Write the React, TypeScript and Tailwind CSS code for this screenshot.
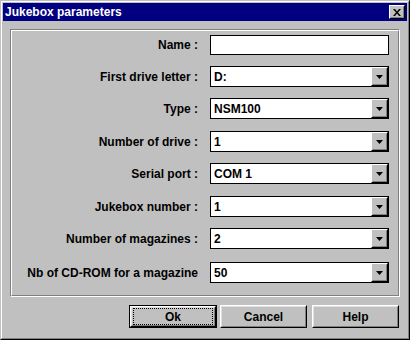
const rows = [
  { label: "Name :", value: "", combo: false, mt: "mt-[4px]" },
  { label: "First drive letter :", value: "D:", combo: true, mt: "mt-[11px]" },
  { label: "Type :", value: "NSM100", combo: true, mt: "mt-[11px]" },
  { label: "Number of drive :", value: "1", combo: true, mt: "mt-[12px]" },
  { label: "Serial port :", value: "COM 1", combo: true, mt: "mt-[11px]" },
  { label: "Jukebox number :", value: "1", combo: true, mt: "mt-[12px]" },
  { label: "Number of magazines :", value: "2", combo: true, mt: "mt-[11px]" },
  { label: "Nb of CD-ROM for a magazine", value: "50", combo: true, mt: "mt-[13px]" },
];

function Field({ value, combo }: { value: string; combo: boolean }) {
  return (
    <div
      className={`flex w-[179px] items-stretch border border-black bg-white ${
        combo ? "h-[21px]" : "h-[20px]"
      }`}
    >
      <span className="flex flex-1 items-center pl-[3px] text-[12px] font-bold leading-none">
        {value}
      </span>
      {combo && (
        <div className="w-[17px] border border-t-white border-l-white border-r-black border-b-black bg-[#c0c0c0]">
          <div className="flex h-full items-center justify-center border border-transparent border-r-[#808080] border-b-[#808080]">
            <svg width="7" height="4" viewBox="0 0 7 4">
              <path d="M0 0h7L3.5 4z" fill="#000" />
            </svg>
          </div>
        </div>
      )}
    </div>
  );
}

function Button({ label, isDefault }: { label: string; isDefault?: boolean }) {
  const face = (
    <div className="h-full border border-t-white border-l-white border-r-black border-b-black">
      <div className="flex h-full items-center justify-center border border-t-[#dfdfdf] border-l-[#dfdfdf] border-r-[#808080] border-b-[#808080] px-[1px]">
        <div
          className={`flex h-full w-full items-center justify-center text-[12px] font-bold ${
            isDefault ? "border border-dotted border-black" : "border border-transparent"
          }`}
        >
          {label}
        </div>
      </div>
    </div>
  );
  return isDefault ? (
    <div className="h-[23px] w-[88px] border border-black">{face}</div>
  ) : (
    <div className="h-[23px] w-[87px]">{face}</div>
  );
}

export default function App() {
  return (
    <div
      className="h-[340px] w-[410px] bg-[#c0c0c0] text-black"
      style={{ fontFamily: '"Liberation Sans", Arial, sans-serif' }}
    >
      <div className="h-full border border-t-[#c0c0c0] border-l-[#c0c0c0] border-r-black border-b-black">
        <div className="flex h-full flex-col border border-t-white border-l-white border-r-[#808080] border-b-[#808080] p-px">
          {/* Title bar */}
          <div className="flex h-[18px] items-center justify-between bg-[#000080] pl-[2px] pr-[2px]">
            <span className="text-[12px] font-bold text-white">Jukebox parameters</span>
            <div className="h-[14px] w-[16px] border border-t-white border-l-white border-r-black border-b-black bg-[#c0c0c0]">
              <div className="flex h-full items-center justify-center border border-transparent border-r-[#808080] border-b-[#808080]">
                <svg width="8" height="7" viewBox="0 0 8 7">
                  <path d="M0 0h2l2 2.5L6 0h2L5 3.5 8 7H6L4 4.5 2 7H0l3-3.5z" fill="#000" />
                </svg>
              </div>
            </div>
          </div>

          {/* Group box */}
          <div className="mx-[7px] mt-[8px] h-[268px] border border-t-[#808080] border-l-[#808080] border-r-white border-b-white">
            <div className="flex h-full flex-col border border-t-white border-l-white border-r-[#808080] border-b-[#808080]">
              {rows.map((r) => (
                <div key={r.label} className={`flex items-center ${r.mt}`}>
                  <span className="w-[186px] text-right text-[12px] font-bold leading-none">
                    {r.label}
                  </span>
                  <div className="ml-[12px]">
                    <Field value={r.value} combo={r.combo} />
                  </div>
                </div>
              ))}
            </div>
          </div>

          {/* Buttons */}
          <div className="mt-[8px] flex justify-end gap-[3px] pr-[8px]">
            <Button label="Ok" isDefault />
            <Button label="Cancel" />
            <div className="ml-[2px]">
              <Button label="Help" />
            </div>
          </div>
        </div>
      </div>
    </div>
  );
}
